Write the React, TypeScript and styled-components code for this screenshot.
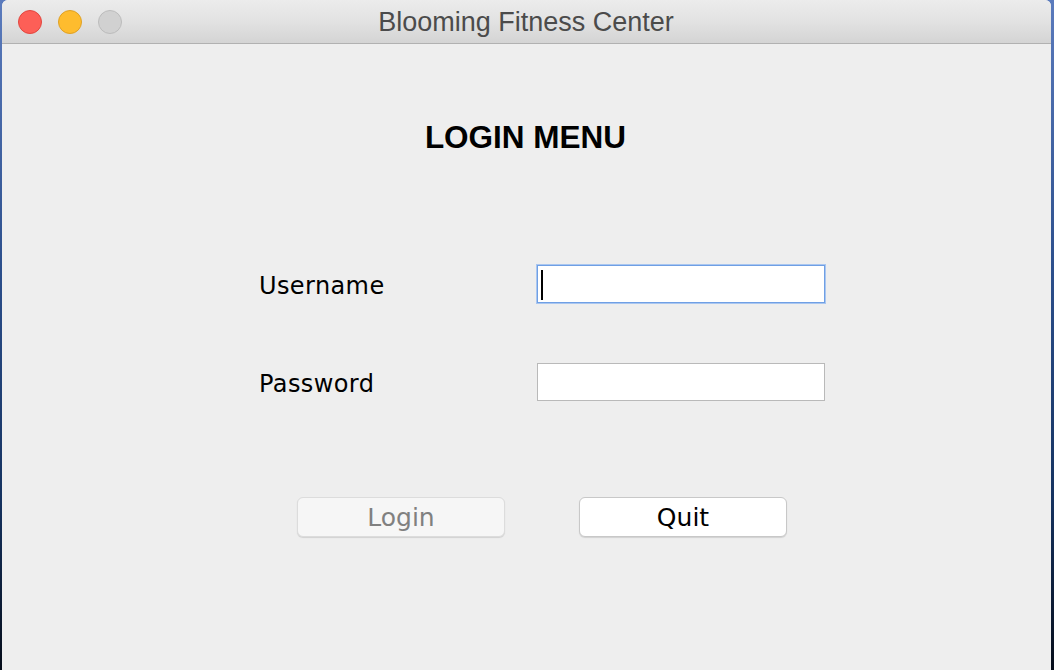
import React from "react";
import styled, { createGlobalStyle } from "styled-components";

const Global = createGlobalStyle`
  html, body { margin: 0; padding: 0; height: 100%; }
  body {
    width: 1054px;
    height: 670px;
    overflow: hidden;
    background: linear-gradient(180deg, #5b7bbd 0%, #2c4f8c 40%, #15325f 75%, #060d1a 100%);
  }
  #root { height: 100%; }
`;

const Desktop = styled.div`
  height: 670px;
  padding-left: 2px;
  box-sizing: border-box;
`;

const Window = styled.div`
  width: 1049px;
  height: 670px;
  background: #eeeeee;
  border-radius: 6px 6px 0 0;
  overflow: hidden;
  display: flex;
  flex-direction: column;
`;

const TitleBar = styled.div`
  position: relative;
  height: 43px;
  flex: none;
  background: linear-gradient(180deg, #ececec 0%, #e2e2e2 50%, #d4d4d4 100%);
  border-bottom: 1px solid #b1b1b1;
  display: flex;
  align-items: center;
  justify-content: center;
`;

const Lights = styled.div`
  position: absolute;
  left: 16px;
  top: 10px;
  display: flex;
  gap: 16px;
`;

const Light = styled.span<{ $bg: string; $bd: string }>`
  width: 24px;
  height: 24px;
  border-radius: 50%;
  box-sizing: border-box;
  background: ${(p) => p.$bg};
  border: 1px solid ${(p) => p.$bd};
`;

const TitleText = styled.div`
  font-family: "Liberation Sans", Arial, sans-serif;
  font-size: 27px;
  color: #4b4b4b;
  line-height: 1;
  margin-left: -1px;
  margin-top: 1px;
`;

const Content = styled.div`
  flex: 1;
  display: flex;
  flex-direction: column;
  padding-top: 77px;
`;

const Heading = styled.h1`
  margin: 0;
  font-family: "Liberation Sans", Arial, sans-serif;
  font-weight: bold;
  font-size: 31.5px;
  line-height: 32px;
  color: #000;
  text-align: center;
  margin-left: -2px;
`;

const Form = styled.div`
  margin-top: 112px;
  padding-left: 257px;
  display: grid;
  grid-template-columns: 278px 288px;
  grid-auto-rows: 38px;
  row-gap: 60px;
  align-items: center;
`;

const Label = styled.label`
  font-family: "DejaVu Sans", "Lucida Grande", sans-serif;
  font-size: 24px;
  letter-spacing: 0.4px;
  color: #000;
  line-height: 1;
  margin-top: 3px;
`;

const Field = styled.div<{ $focused?: boolean }>`
  position: relative;
  height: 38px;
  box-sizing: border-box;
  background: #fff;
  border: 1px solid ${(p) => (p.$focused ? "#6f9fe4" : "#b9b9b9")};
  box-shadow: ${(p) => (p.$focused ? "0 0 0 1px #a9c6f0" : "none")};
`;

const Caret = styled.span`
  position: absolute;
  left: 3px;
  top: 4px;
  width: 2px;
  height: 30px;
  background: #000;
`;

const Buttons = styled.div`
  margin-top: 96px;
  padding-left: 295px;
  display: flex;
  gap: 74px;
`;

const Button = styled.button<{ $disabled?: boolean }>`
  width: 208px;
  height: 40px;
  box-sizing: border-box;
  border-radius: 6px;
  border: 1px solid ${(p) => (p.$disabled ? "#dcdcdc" : "#c8c8c8")};
  background: ${(p) => (p.$disabled ? "#f6f6f6" : "#ffffff")};
  box-shadow: 0 1px 1px rgba(0, 0, 0, 0.12);
  color: ${(p) => (p.$disabled ? "#808080" : "#000")};
  font-family: "DejaVu Sans", "Lucida Grande", sans-serif;
  font-size: 25px;
  line-height: 1;
  padding: 0;
  padding-top: 1px;
  cursor: default;
`;

export default function App() {
  return (
    <>
      <Global />
      <Desktop>
        <Window>
          <TitleBar>
            <Lights>
              <Light $bg="#fd5f57" $bd="#e2463f" />
              <Light $bg="#febc2e" $bd="#dfa125" />
              <Light $bg="#d1d1d1" $bd="#bcbcbc" />
            </Lights>
            <TitleText>Blooming Fitness Center</TitleText>
          </TitleBar>
          <Content>
            <Heading>LOGIN MENU</Heading>
            <Form>
              <Label>Username</Label>
              <Field $focused>
                <Caret />
              </Field>
              <Label>Password</Label>
              <Field />
            </Form>
            <Buttons>
              <Button $disabled>Login</Button>
              <Button>Quit</Button>
            </Buttons>
          </Content>
        </Window>
      </Desktop>
    </>
  );
}
